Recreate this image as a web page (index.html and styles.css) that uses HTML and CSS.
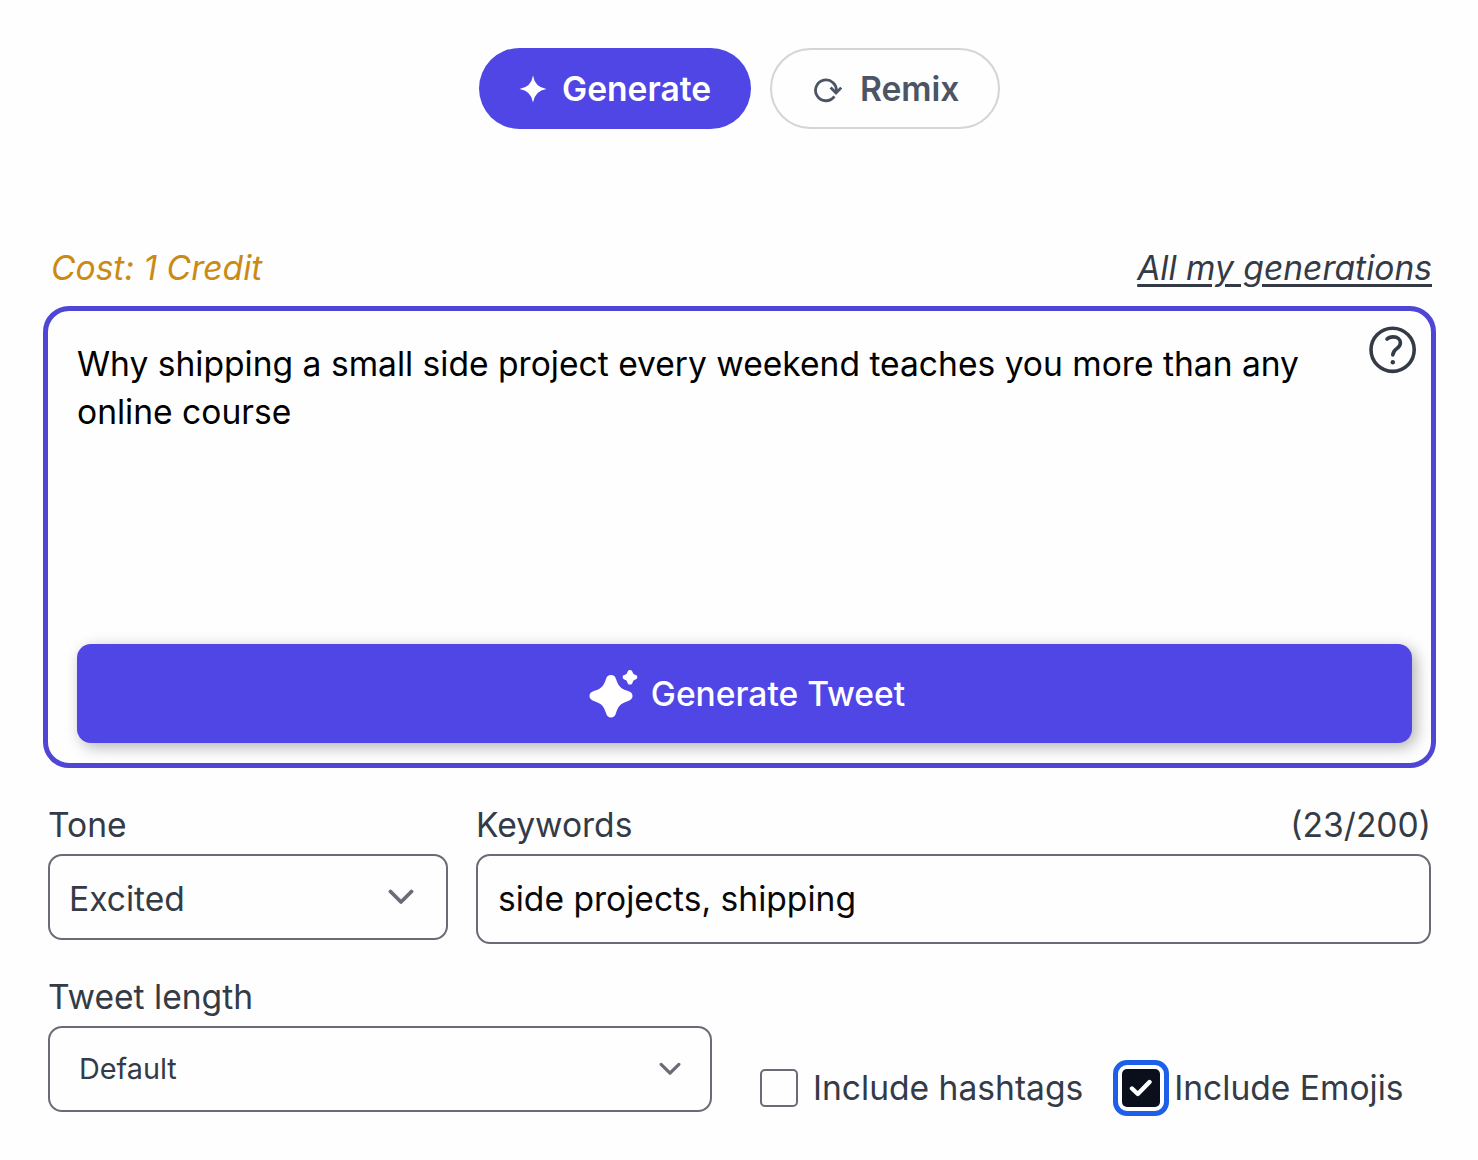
FILE: index.html
```html
<!DOCTYPE html>
<html lang="en">

<head>
    <meta charset="UTF-8">
    <meta name="viewport" content="width=device-width, initial-scale=1.0">
    <title>Tweet Generator</title>
    <link rel="stylesheet" href="styles.css">
</head>

<body>
    <nav class="tabs">
        <button class="tab active">
            <svg class="tab-icon" viewBox="0 0 28 28"><path d="M14 .5 Q15.8 12.2 27.5 14 Q15.8 15.8 14 27.5 Q12.2 15.8 .5 14 Q12.2 12.2 14 .5 Z" fill="currentColor"/></svg>
            <span>Generate</span>
        </button>
        <button class="tab remix">
            <svg class="tab-icon" viewBox="0 0 28 28" fill="none" stroke="currentColor" stroke-width="2.8"><path d="M20.4 21.4 A10.4 10.4 0 1 1 22.2 17"/><path d="M16.6 12.6 L22 18 L27.2 12.6"/></svg>
            <span>Remix</span>
        </button>
    </nav>

    <div class="meta">
        <span class="cost">Cost: 1 Credit</span>
        <a class="history" href="#">All my generations</a>
    </div>

    <section class="prompt">
        <textarea class="prompt-text" spellcheck="false">Why shipping a small side project every weekend teaches you more than any online course</textarea>
        <svg class="help" viewBox="0 0 48 48" fill="none" stroke="currentColor"><circle cx="23.6" cy="23.8" r="21.6" stroke-width="3.6"/><path d="M18 13.2 C19.5 11.3 22 10.9 24.3 10.9 C28.6 10.9 31.4 13.2 31.4 16.9 C31.4 22.8 23.8 22.5 23.8 29" stroke-width="3.6" stroke-linecap="round"/><circle cx="23.8" cy="36.2" r="2.2" fill="currentColor" stroke="none"/></svg>
        <button class="submit">
            <svg class="sparkle" viewBox="0 0 48 48" fill="currentColor"><path d="M22 5 C24.8 5 26.2 6.6 27 9 C29.2 15.7 31.2 18.4 38.5 20.8 C42 21.9 43.5 23.5 43.5 26 C43.5 28.5 42 30.1 38.5 31.2 C31.2 33.6 29.2 36.3 27 43 C26.2 45.8 24.8 47.5 22 47.5 C19.2 47.5 17.8 45.8 17 43 C14.8 36.3 12.8 33.6 5.5 31.2 C2 30.1 .5 28.5 .5 26 C.5 23.5 2 21.9 5.5 20.8 C12.8 18.4 14.8 15.7 17 9 C17.8 6.6 19.2 5 22 5 Z"/><path d="M41 0 C43.3 0 43.5 2 44 3.2 Q44.4 4.2 45.5 4.6 C47 5.1 48.3 5.5 48.3 7.3 C48.3 9.1 47 9.4 45.5 9.9 Q44.4 10.3 44 11.4 C43.5 12.7 43.3 14.6 41 14.6 C38.7 14.6 38.5 12.7 38 11.4 Q37.6 10.3 36.5 9.9 C35 9.4 33.7 9.1 33.7 7.3 C33.7 5.5 35 5.1 36.5 4.6 Q37.6 4.2 38 3.2 C38.5 2 38.7 0 41 0 Z"/></svg>
            <span>Generate Tweet</span>
        </button>
    </section>

    <div class="row">
        <div class="field tone">
            <label>Tone</label>
            <div class="select">
                <span>Excited</span>
                <svg class="chevron" viewBox="0 0 26 16"><path d="M2.5 2.5 L13 13 L23.5 2.5"/></svg>
            </div>
        </div>
        <div class="field keywords">
            <div class="label-row">
                <label for="keywords">Keywords</label>
                <span>(23/200)</span>
            </div>
            <input type="text" id="keywords" value="side projects, shipping">
        </div>
    </div>

    <div class="row options">
        <div class="field length">
            <label>Tweet length</label>
            <div class="select small">
                <span>Default</span>
                <svg class="chevron" viewBox="0 0 26 16"><path d="M2.5 2.5 L13 13 L23.5 2.5"/></svg>
            </div>
        </div>
        <div class="check hashtags">
            <span class="box"></span>
            <span>Include hashtags</span>
        </div>
        <div class="check emojis">
            <span class="box checked">
                <svg viewBox="0 0 24 20"><path d="M3 10.5 L8.8 16 L20.5 4"/></svg>
            </span>
            <span>Include Emojis</span>
        </div>
    </div>
</body>

</html>
```
FILE: styles.css
```css
:root {
    --primary-color: #4f46e5;
    --text-color: #343b46;
    --border-color: #6b6b76;
}

* {
    margin: 0;
    padding: 0;
    box-sizing: border-box;
}

body {
    font-family: Inter, "Liberation Sans", sans-serif;
    font-size: 33.6px;
    line-height: 48px;
    color: var(--text-color);
    min-height: 100vh;
    padding: 48px 42px 40px 43px;
    background-color: #fefefe;
}

button,
input,
textarea {
    font: inherit;
    border: none;
    outline: none;
}

svg {
    display: block;
    flex: none;
}

.tabs {
    display: flex;
    justify-content: center;
    gap: 19px;
}

.tab {
    display: flex;
    align-items: center;
    gap: 15px;
    width: 272px;
    height: 81px;
    padding-left: 40px;
    border-radius: 41px;
    background: #fefefe;
    color: #4b5563;
    font-weight: 600;
}

.tab.active {
    background: var(--primary-color);
    color: #fff;
}

.tab.remix {
    width: 230px;
    padding-left: 42px;
    gap: 18px;
    border: 2px solid #d4d5d8;
}

.tab-icon {
    width: 28px;
    height: 28px;
}

.meta {
    display: flex;
    justify-content: space-between;
    margin-top: 115px;
    padding: 0 4px 0 8px;
    font-style: italic;
}

.cost {
    color: #ca8a14;
}

.history {
    color: var(--text-color);
    text-underline-offset: 4px;
    text-decoration-thickness: 3px;
}

.prompt {
    position: relative;
    display: flex;
    flex-direction: column;
    height: 462px;
    margin-top: 14px;
    padding: 29px 19px 20px 29px;
    border: 5px solid #5046d6;
    border-radius: 26px;
    background: #fefefe;
}

.prompt-text {
    flex: 1;
    padding-right: 80px;
    resize: none;
    background: transparent;
    color: #000;
}

.help {
    position: absolute;
    top: 15px;
    right: 14px;
    width: 48px;
    height: 48px;
}

.submit {
    display: flex;
    align-items: center;
    justify-content: center;
    gap: 14px;
    height: 99px;
    padding-left: 5px;
    border-radius: 14px;
    background: var(--primary-color);
    color: #fff;
    font-weight: 500;
    box-shadow: 4px 4px 15px rgba(0, 0, 0, 0.3);
}

.sparkle {
    width: 48px;
    height: 48px;
    overflow: visible;
}

.row {
    display: flex;
    gap: 28px;
    margin-top: 33px;
    padding: 0 5px;
}

.field {
    display: flex;
    flex-direction: column;
    gap: 5px;
}

.label-row {
    display: flex;
    justify-content: space-between;
}

.tone {
    width: 400px;
}

.keywords {
    flex: 1;
}

.select {
    display: flex;
    align-items: center;
    justify-content: space-between;
    height: 86px;
    padding: 4px 32px 0 19px;
    border: 2px solid var(--border-color);
    border-radius: 14px;
    background: #fefefe;
}

.select.small {
    padding: 0 29px;
    font-size: 28.8px;
}

.chevron {
    width: 26px;
    height: 16px;
    margin-top: -4px;
    fill: none;
    stroke: var(--border-color);
    stroke-width: 3.8;
    stroke-linecap: round;
    stroke-linejoin: round;
}

.small .chevron {
    width: 22px;
    height: 14px;
    margin-top: 0;
}

#keywords {
    width: 100%;
    height: 90px;
    padding: 0 20px 2px;
    border: 2px solid var(--border-color);
    border-radius: 14px;
    background: #fefefe;
    color: #09090b;
}

.options {
    gap: 0;
    margin-top: 29px;
    align-items: flex-end;
}

.length {
    width: 664px;
}

.check {
    display: flex;
    align-items: center;
}

.hashtags {
    gap: 15px;
    margin-left: 48px;
}

.emojis {
    gap: 14px;
    margin-left: 39px;
}

.box {
    display: flex;
    align-items: center;
    justify-content: center;
    width: 38px;
    height: 38px;
    border: 2px solid var(--border-color);
    border-radius: 5px;
    background: #fefefe;
}

.box.checked {
    border: none;
    background: #0b0f1c;
    outline: 5px solid #1d5fe8;
    outline-offset: 4.5px;
}

.box svg {
    width: 24px;
    height: 20px;
    fill: none;
    stroke: #fff;
    stroke-width: 4.4;
    stroke-linecap: round;
    stroke-linejoin: round;
}
```
